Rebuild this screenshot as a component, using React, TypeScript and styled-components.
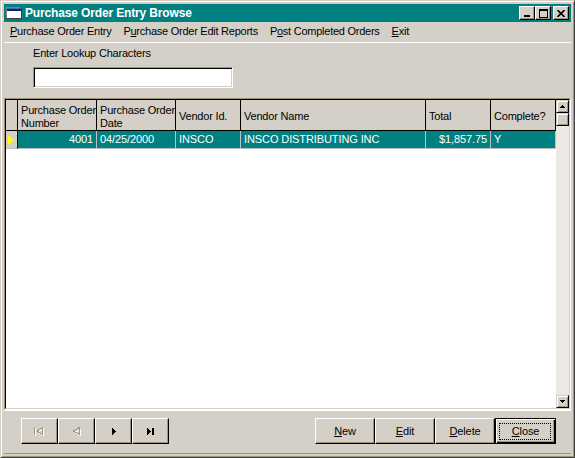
import React from 'react';
import styled, { createGlobalStyle } from 'styled-components';

const FACE = '#d4d0c8';
const SHADOW = '#a0947e';
const TEAL = '#008080';
const FONT = '"Liberation Sans", Arial, sans-serif';

const Global = createGlobalStyle`
  html, body { margin: 0; padding: 0; background: ${FACE}; }
  body { font-family: ${FONT}; font-size: 11px; color: #000; }
  * { box-sizing: border-box; }
`;

const Window = styled.div`
  width: 575px;
  height: 458px;
  background: ${FACE};
  border: 1px solid;
  border-color: ${FACE} #404040 #404040 ${FACE};
  box-shadow: inset 1px 1px 0 #fff, inset -1px -1px 0 ${SHADOW};
  padding: 3px;
  display: flex;
  flex-direction: column;
  overflow: hidden;
`;

const TitleBar = styled.div`
  height: 18px;
  flex: none;
  background: ${TEAL};
  display: flex;
  align-items: center;
  padding: 0 2px;
  color: #fff;
`;

const TitleIcon = styled.svg`
  width: 16px;
  height: 12px;
  margin-right: 3px;
  flex: none;
`;

const TitleText = styled.span`
  flex: 1;
  font: bold 12px ${FONT};
  letter-spacing: -0.15px;
  white-space: nowrap;
`;

const CaptionButton = styled.div<{ $gap?: boolean }>`
  width: 16px;
  height: 14px;
  flex: none;
  background: ${FACE};
  border: 1px solid;
  border-color: #fff #000 #000 #fff;
  box-shadow: inset -1px -1px 0 ${SHADOW};
  display: flex;
  align-items: center;
  justify-content: center;
  margin-left: ${(p) => (p.$gap ? '2px' : '0')};
`;

const MenuBar = styled.div`
  height: 19px;
  flex: none;
  display: flex;
  align-items: center;
`;

const MenuItem = styled.span`
  padding: 0 6px;
  line-height: 19px;
  letter-spacing: -0.25px;
  white-space: nowrap;
  u { text-decoration: underline; text-underline-offset: 1px; }
`;

const LookupPanel = styled.div`
  height: 56px;
  flex: none;
  margin-top: 1px;
  border-top: 1px solid #fff;
  padding: 4px 0 0 29px;
  display: flex;
  flex-direction: column;
  gap: 7px;
`;

const Label = styled.label`
  line-height: 13px;
  letter-spacing: -0.2px;
`;

const LookupInput = styled.input`
  width: 200px;
  height: 21px;
  background: #fff;
  border: 1px solid;
  border-color: ${SHADOW} #fff #fff ${SHADOW};
  box-shadow: inset 1px 1px 0 #000, inset -1px -1px 0 ${FACE};
  outline: none;
  padding: 0 3px;
  font: 11px ${FONT};
`;

const GridFrame = styled.div`
  height: 312px;
  flex: none;
  border: 1px solid;
  border-color: ${SHADOW} #fff #fff ${SHADOW};
  display: flex;
`;

const GridInner = styled.div`
  flex: 1;
  display: flex;
  border: 1px solid;
  border-color: #000 ${FACE} ${FACE} #000;
  background: #fff;
  min-width: 0;
`;

const Table = styled.div`
  width: 550px;
  flex: none;
  display: flex;
  flex-direction: column;
  background: #fff;
`;

const COLS = '12px 79px 79px 65px 185px 65px 65px';

const HeaderRow = styled.div`
  display: grid;
  grid-template-columns: ${COLS};
  height: 31px;
`;

const HeaderCell = styled.div`
  background: ${FACE};
  border-right: 1px solid #000;
  border-bottom: 1px solid #000;
  padding: 3px 3px 0 3px;
  display: flex;
  align-items: center;
  line-height: 13px;
  letter-spacing: -0.2px;
  overflow: hidden;
  white-space: pre;
`;

const DataRow = styled.div`
  display: grid;
  grid-template-columns: ${COLS};
  height: 18px;
`;

const Indicator = styled.div`
  background: ${FACE};
  border-right: 1px solid #000;
  border-bottom: 1px solid #c0c0c0;
  display: flex;
  align-items: center;
  justify-content: flex-start;
  padding-left: 2px;
`;

const DataCell = styled.div<{ $right?: boolean }>`
  background: ${TEAL};
  color: #fff;
  border-right: 1px solid #c0c0c0;
  border-bottom: 1px solid #c0c0c0;
  padding: 0 3px;
  line-height: 17px;
  white-space: nowrap;
  overflow: hidden;
  text-align: ${(p) => (p.$right ? 'right' : 'left')};
  letter-spacing: -0.1px;
`;

const VScroll = styled.div`
  width: 13px;
  flex: none;
  display: flex;
  flex-direction: column;
  background: #ece9e2;
`;

const ScrollButton = styled.div`
  height: 13px;
  flex: none;
  background: ${FACE};
  border: 1px solid;
  border-color: ${FACE} #000 #000 ${FACE};
  box-shadow: inset 1px 1px 0 #fff, inset -1px -1px 0 ${SHADOW};
  display: flex;
  align-items: center;
  justify-content: center;
`;

const Track = styled.div`
  flex: 1;
`;

const BottomPanel = styled.div`
  height: 44px;
  flex: none;
  border-top: 1px solid #fff;
  border-bottom: 1px solid ${SHADOW};
  padding: 7px 15px 0 17px;
  display: flex;
  justify-content: space-between;
  align-items: flex-start;
`;

const ButtonGroup = styled.div`
  display: flex;
`;

const Button = styled.div<{ $w: number; $default?: boolean }>`
  width: ${(p) => p.$w}px;
  height: 26px;
  background: ${FACE};
  border: 1px solid;
  border-color: ${(p) => (p.$default ? '#000' : '#fff #000 #000 #fff')};
  box-shadow: ${(p) =>
    p.$default
      ? `inset 1px 1px 0 #fff, inset -1px -1px 0 #000, inset -2px -2px 0 ${SHADOW}`
      : `inset -1px -1px 0 ${SHADOW}`};
  display: flex;
  align-items: center;
  justify-content: center;
  letter-spacing: -0.1px;
  position: relative;
  u { text-decoration: underline; text-underline-offset: 1px; }
`;

const FocusRect = styled.span`
  position: absolute;
  left: 3px;
  top: 4px;
  right: 4px;
  bottom: 3px;
  border: 1px dotted #000;
  pointer-events: none;
`;

const Glyph = styled.svg`
  display: block;
  shape-rendering: crispEdges;
`;

const headers = [
  '',
  'Purchase Order\nNumber',
  'Purchase Order\nDate',
  'Vendor Id.',
  'Vendor Name',
  'Total',
  'Complete?',
];

const row = [
  { v: '4001', right: true },
  { v: '04/25/2000' },
  { v: 'INSCO' },
  { v: 'INSCO DISTRIBUTING INC' },
  { v: '$1,857.75', right: true },
  { v: 'Y' },
];

export default function App() {
  return (
    <>
      <Global />
      <Window>
        <TitleBar>
          <TitleIcon viewBox="0 0 16 12">
            <rect x="0.5" y="0.5" width="15" height="11" fill="#fff" stroke="#808080" />
            <rect x="1" y="1" width="14" height="3" fill="#0a246a" />
            <rect x="1" y="1" width="14" height="1" fill="#3a6ea5" />
            <rect x="15" y="0" width="1" height="12" fill="#404040" />
            <rect x="0" y="11" width="16" height="1" fill="#404040" />
          </TitleIcon>
          <TitleText>Purchase Order Entry Browse</TitleText>
          <CaptionButton>
            <Glyph width="8" height="7" viewBox="0 0 8 7">
              <rect x="1" y="5" width="6" height="2" fill="#000" />
            </Glyph>
          </CaptionButton>
          <CaptionButton>
            <Glyph width="9" height="9" viewBox="0 0 9 9">
              <rect x="0" y="0" width="9" height="2" fill="#000" />
              <rect x="0" y="0" width="1" height="9" fill="#000" />
              <rect x="8" y="0" width="1" height="9" fill="#000" />
              <rect x="0" y="8" width="9" height="1" fill="#000" />
            </Glyph>
          </CaptionButton>
          <CaptionButton $gap>
            <Glyph width="8" height="7" viewBox="0 0 8 7" style={{ shapeRendering: 'auto' }}>
              <path d="M0.5 0 L7.5 7 M7.5 0 L0.5 7" stroke="#000" strokeWidth="1.6" />
            </Glyph>
          </CaptionButton>
        </TitleBar>

        <MenuBar>
          <MenuItem><u>P</u>urchase Order Entry</MenuItem>
          <MenuItem>P<u>u</u>rchase Order Edit Reports</MenuItem>
          <MenuItem>P<u>o</u>st Completed Orders</MenuItem>
          <MenuItem><u>E</u>xit</MenuItem>
        </MenuBar>

        <LookupPanel>
          <Label>Enter Lookup Characters</Label>
          <LookupInput defaultValue="" />
        </LookupPanel>

        <GridFrame>
          <GridInner>
            <Table>
              <HeaderRow>
                {headers.map((h, i) => (
                  <HeaderCell key={i}>{h}</HeaderCell>
                ))}
              </HeaderRow>
              <DataRow>
                <Indicator>
                  <Glyph width="6" height="10" viewBox="0 0 6 10" style={{ shapeRendering: 'auto' }}>
                    <path d="M0 0 L6 5 L0 10 Z" fill="#ffff00" />
                  </Glyph>
                </Indicator>
                {row.map((c, i) => (
                  <DataCell key={i} $right={c.right}>{c.v}</DataCell>
                ))}
              </DataRow>
            </Table>
            <VScroll>
              <ScrollButton>
                <Glyph width="5" height="3" viewBox="0 0 5 3">
                  <path d="M2 0h1v1h1v1h1v1H0V2h1V1h1z" fill="#000" />
                </Glyph>
              </ScrollButton>
              <ScrollButton />
              <Track />
              <ScrollButton>
                <Glyph width="5" height="3" viewBox="0 0 5 3">
                  <path d="M0 0h5v1H4v1H3v1H2V2H1V1H0z" fill="#000" />
                </Glyph>
              </ScrollButton>
            </VScroll>
          </GridInner>
        </GridFrame>

        <BottomPanel>
          <ButtonGroup>
            <Button $w={37}>
              <Glyph width="11" height="9" viewBox="0 0 11 9">
                <g fill="none" stroke="#fff" transform="translate(1 1)">
                  <path d="M0.5 0v8" />
                  <path d="M8.5 0.5 L3 4 L8.5 7.5 Z" />
                </g>
                <g fill="none" stroke={SHADOW}>
                  <path d="M0.5 0v8" />
                  <path d="M8.5 0.5 L3 4 L8.5 7.5 Z" />
                </g>
              </Glyph>
            </Button>
            <Button $w={37}>
              <Glyph width="8" height="9" viewBox="0 0 8 9">
                <path d="M6.5 1.5 L1.5 4.5 L6.5 7.5 Z" fill="none" stroke="#fff" transform="translate(1 1)" />
                <path d="M6.5 0.5 L0.5 4 L6.5 7.5 Z" fill="none" stroke={SHADOW} />
              </Glyph>
            </Button>
            <Button $w={37}>
              <Glyph width="4" height="7" viewBox="0 0 4 7">
                <path d="M0 0h1v1h1v1h1v1h1v1H3v1H2v1H1v1H0z" fill="#000" />
              </Glyph>
            </Button>
            <Button $w={37}>
              <Glyph width="8" height="7" viewBox="0 0 8 7">
                <path d="M0 0h1v1h1v1h1v1h1v1H3v1H2v1H1v1H0z" fill="#000" />
                <rect x="5" y="0" width="2" height="7" fill="#000" />
              </Glyph>
            </Button>
          </ButtonGroup>
          <ButtonGroup>
            <Button $w={60}><span><u>N</u>ew</span></Button>
            <Button $w={60}><span><u>E</u>dit</span></Button>
            <Button $w={60}><span><u>D</u>elete</span></Button>
            <Button $w={61} $default>
              <span><u>C</u>lose</span>
              <FocusRect />
            </Button>
          </ButtonGroup>
        </BottomPanel>
      </Window>
    </>
  );
}
